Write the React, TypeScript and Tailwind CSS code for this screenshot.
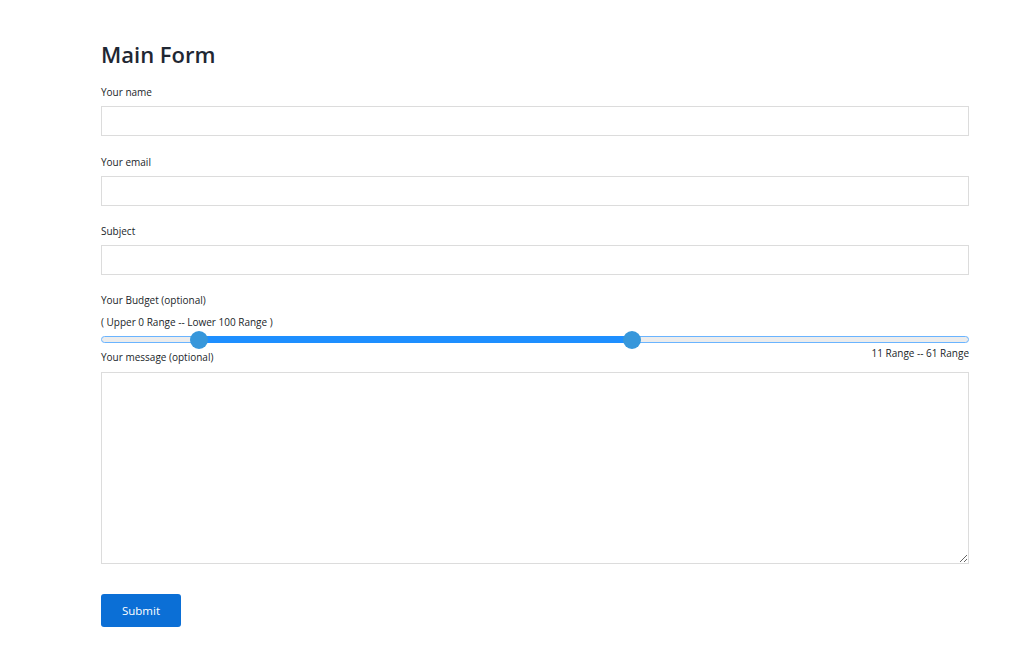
import React from "react";

const font = { fontFamily: '"Open Sans", "Noto Sans", Arial, sans-serif' };

function Field({ label, mt }: { label: string; mt: string }) {
  return (
    <div className={mt}>
      <label className="block text-[10px] leading-[14px] text-[#212529]">{label}</label>
      <input className="mt-[7px] block h-[30px] w-full border border-[#dcdcdc] bg-white outline-none" />
    </div>
  );
}

export default function App() {
  return (
    <div className="min-h-[647px] w-full bg-white" style={font}>
      <div className="ml-[101px] w-[868px] pt-[38px]">
        <h1 className="text-[22px] font-semibold leading-[32px] text-[#1f2733]">Main Form</h1>
        <Field label="Your name" mt="mt-[15px]" />
        <Field label="Your email" mt="mt-[19px]" />
        <Field label="Subject" mt="mt-[18px]" />
        <div className="mt-[18px] text-[10px] leading-[14px] text-[#212529]">Your Budget (optional)</div>
        <div className="mt-[8px] text-[10px] leading-[14px] text-[#212529]">( Upper 0 Range -- Lower 100 Range )</div>
        <div className="relative mt-[2px] h-[18px]">
          <div className="absolute left-0 right-0 top-[5px] h-[7px] rounded-full border border-[#6ab4ff] bg-[#ececec]" />
          <div className="absolute left-[98px] top-[5px] h-[7px] w-[433px] bg-[#1e8fff]" />
          <div className="absolute left-[89px] top-0 h-[18px] w-[18px] rounded-full bg-[#3797db]" />
          <div className="absolute left-[522px] top-0 h-[18px] w-[18px] rounded-full bg-[#3797db]" />
        </div>
        <div className="mt-[-3px] flex items-start justify-between text-[10px] leading-[14px] text-[#212529]">
          <span className="mt-[4px]">Your message (optional)</span>
          <span>11 Range -- 61 Range</span>
        </div>
        <textarea className="mt-[8px] block h-[192px] w-full resize-y border border-[#dcdcdc] outline-none" />
        <button className="mt-[30px] h-[33px] w-[80px] rounded-[3px] bg-[#0b6fd6] text-[11.5px] text-white">
          Submit
        </button>
      </div>
    </div>
  );
}
